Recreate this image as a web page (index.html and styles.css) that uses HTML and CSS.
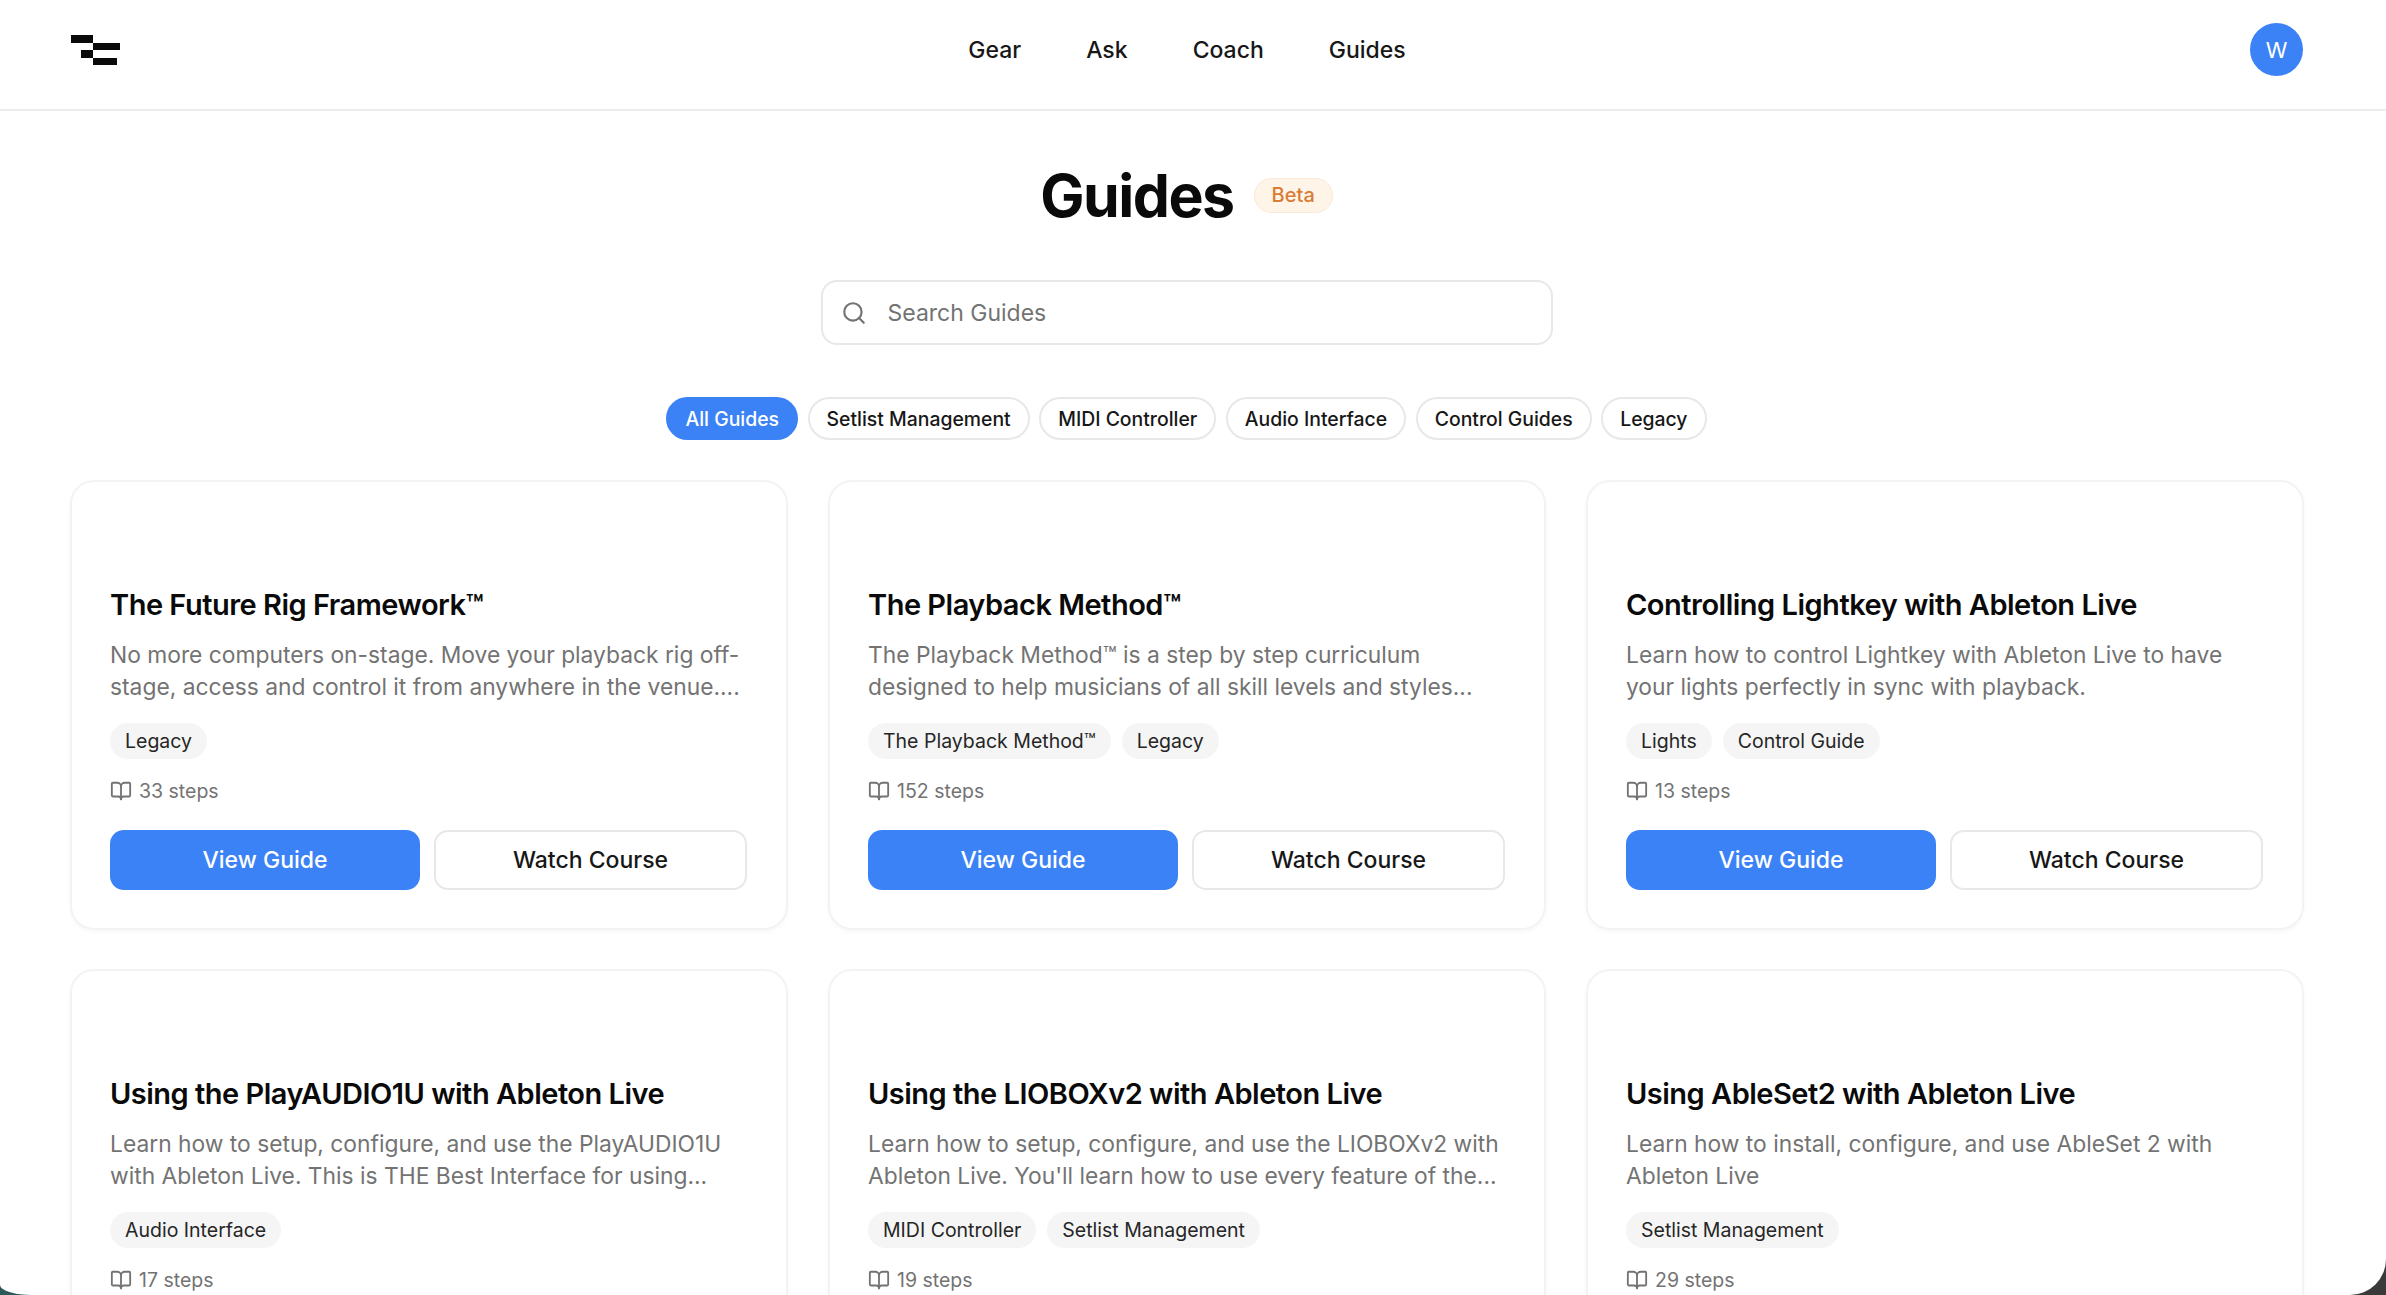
FILE: index.html
```html
<!DOCTYPE html>
<html lang="en">
<head>
    <meta charset="UTF-8">
    <meta name="viewport" content="width=device-width, initial-scale=1.0">
    <title>Guides</title>
    <link rel="stylesheet" href="styles.css">
</head>
<body>
    <div class="page">
        <header class="topbar">
            <a class="logo" href="#" aria-label="Home">
                <svg width="49" height="30" viewBox="0 0 49 30" fill="#0a0a0a">
                    <rect x="0" y="0" width="22" height="8"/>
                    <rect x="22" y="8" width="27" height="7"/>
                    <rect x="10" y="15" width="12" height="8"/>
                    <rect x="22" y="23" width="24" height="7"/>
                </svg>
            </a>
            <nav class="nav">
                <a href="#">Gear</a>
                <a href="#">Ask</a>
                <a href="#">Coach</a>
                <a href="#">Guides</a>
            </nav>
            <div class="avatar">W</div>
        </header>

        <main class="content">
            <div class="heading">
                <h1>Guides</h1>
                <span class="beta">Beta</span>
            </div>

            <label class="search">
                <svg class="search-icon" width="26" height="26" viewBox="0 0 24 24" fill="none" stroke="#737373" stroke-width="2" stroke-linecap="round" stroke-linejoin="round">
                    <circle cx="11" cy="11" r="8"/>
                    <path d="m21 21-4.3-4.3"/>
                </svg>
                <input type="text" placeholder="Search Guides">
            </label>

            <div class="filters">
                <button class="filter active">All Guides</button>
                <button class="filter">Setlist Management</button>
                <button class="filter">MIDI Controller</button>
                <button class="filter">Audio Interface</button>
                <button class="filter">Control Guides</button>
                <button class="filter">Legacy</button>
            </div>

            <div class="grid">
                <article class="card">
                    <h2>The Future Rig Framework™</h2>
                    <p>No more computers on-stage. Move your playback rig off-stage, access and control it from anywhere in the venue....</p>
                    <div class="tags"><span class="tag">Legacy</span></div>
                    <div class="steps">
                        <svg width="22" height="22" viewBox="0 0 24 24" fill="none" stroke="#737373" stroke-width="2" stroke-linecap="round" stroke-linejoin="round"><path d="M12 7v14"/><path d="M3 18a1 1 0 0 1-1-1V4a1 1 0 0 1 1-1h5a4 4 0 0 1 4 4 4 4 0 0 1 4-4h5a1 1 0 0 1 1 1v13a1 1 0 0 1-1 1h-6a3 3 0 0 0-3 3 3 3 0 0 0-3-3z"/></svg>
                        33 steps
                    </div>
                    <div class="actions">
                        <a class="btn primary" href="#">View Guide</a>
                        <a class="btn outline" href="#">Watch Course</a>
                    </div>
                </article>

                <article class="card">
                    <h2>The Playback Method™</h2>
                    <p>The Playback Method™ is a step by step curriculum designed to help musicians of all skill levels and styles...</p>
                    <div class="tags"><span class="tag">The Playback Method™</span><span class="tag">Legacy</span></div>
                    <div class="steps">
                        <svg width="22" height="22" viewBox="0 0 24 24" fill="none" stroke="#737373" stroke-width="2" stroke-linecap="round" stroke-linejoin="round"><path d="M12 7v14"/><path d="M3 18a1 1 0 0 1-1-1V4a1 1 0 0 1 1-1h5a4 4 0 0 1 4 4 4 4 0 0 1 4-4h5a1 1 0 0 1 1 1v13a1 1 0 0 1-1 1h-6a3 3 0 0 0-3 3 3 3 0 0 0-3-3z"/></svg>
                        152 steps
                    </div>
                    <div class="actions">
                        <a class="btn primary" href="#">View Guide</a>
                        <a class="btn outline" href="#">Watch Course</a>
                    </div>
                </article>

                <article class="card">
                    <h2>Controlling Lightkey with Ableton Live</h2>
                    <p>Learn how to control Lightkey with Ableton Live to have your lights perfectly in sync with playback.</p>
                    <div class="tags"><span class="tag">Lights</span><span class="tag">Control Guide</span></div>
                    <div class="steps">
                        <svg width="22" height="22" viewBox="0 0 24 24" fill="none" stroke="#737373" stroke-width="2" stroke-linecap="round" stroke-linejoin="round"><path d="M12 7v14"/><path d="M3 18a1 1 0 0 1-1-1V4a1 1 0 0 1 1-1h5a4 4 0 0 1 4 4 4 4 0 0 1 4-4h5a1 1 0 0 1 1 1v13a1 1 0 0 1-1 1h-6a3 3 0 0 0-3 3 3 3 0 0 0-3-3z"/></svg>
                        13 steps
                    </div>
                    <div class="actions">
                        <a class="btn primary" href="#">View Guide</a>
                        <a class="btn outline" href="#">Watch Course</a>
                    </div>
                </article>

                <article class="card">
                    <h2>Using the PlayAUDIO1U with Ableton Live</h2>
                    <p>Learn how to setup, configure, and use the PlayAUDIO1U with Ableton Live. This is THE Best Interface for using...</p>
                    <div class="tags"><span class="tag">Audio Interface</span></div>
                    <div class="steps">
                        <svg width="22" height="22" viewBox="0 0 24 24" fill="none" stroke="#737373" stroke-width="2" stroke-linecap="round" stroke-linejoin="round"><path d="M12 7v14"/><path d="M3 18a1 1 0 0 1-1-1V4a1 1 0 0 1 1-1h5a4 4 0 0 1 4 4 4 4 0 0 1 4-4h5a1 1 0 0 1 1 1v13a1 1 0 0 1-1 1h-6a3 3 0 0 0-3 3 3 3 0 0 0-3-3z"/></svg>
                        17 steps
                    </div>
                    <div class="actions">
                        <a class="btn primary" href="#">View Guide</a>
                        <a class="btn outline" href="#">Watch Course</a>
                    </div>
                </article>

                <article class="card">
                    <h2>Using the LIOBOXv2 with Ableton Live</h2>
                    <p>Learn how to setup, configure, and use the LIOBOXv2 with Ableton Live. You'll learn how to use every feature of the...</p>
                    <div class="tags"><span class="tag">MIDI Controller</span><span class="tag">Setlist Management</span></div>
                    <div class="steps">
                        <svg width="22" height="22" viewBox="0 0 24 24" fill="none" stroke="#737373" stroke-width="2" stroke-linecap="round" stroke-linejoin="round"><path d="M12 7v14"/><path d="M3 18a1 1 0 0 1-1-1V4a1 1 0 0 1 1-1h5a4 4 0 0 1 4 4 4 4 0 0 1 4-4h5a1 1 0 0 1 1 1v13a1 1 0 0 1-1 1h-6a3 3 0 0 0-3 3 3 3 0 0 0-3-3z"/></svg>
                        19 steps
                    </div>
                    <div class="actions">
                        <a class="btn primary" href="#">View Guide</a>
                        <a class="btn outline" href="#">Watch Course</a>
                    </div>
                </article>

                <article class="card">
                    <h2>Using AbleSet2 with Ableton Live</h2>
                    <p>Learn how to install, configure, and use AbleSet 2 with Ableton Live</p>
                    <div class="tags"><span class="tag">Setlist Management</span></div>
                    <div class="steps">
                        <svg width="22" height="22" viewBox="0 0 24 24" fill="none" stroke="#737373" stroke-width="2" stroke-linecap="round" stroke-linejoin="round"><path d="M12 7v14"/><path d="M3 18a1 1 0 0 1-1-1V4a1 1 0 0 1 1-1h5a4 4 0 0 1 4 4 4 4 0 0 1 4-4h5a1 1 0 0 1 1 1v13a1 1 0 0 1-1 1h-6a3 3 0 0 0-3 3 3 3 0 0 0-3-3z"/></svg>
                        29 steps
                    </div>
                    <div class="actions">
                        <a class="btn primary" href="#">View Guide</a>
                        <a class="btn outline" href="#">Watch Course</a>
                    </div>
                </article>
            </div>
        </main>
    </div>
</body>
</html>
```

FILE: styles.css
```css
* {
    margin: 0;
    padding: 0;
    box-sizing: border-box;
}

html {
    background: linear-gradient(90deg, #2c5a58 0%, #3a3a3a 100%);
}

body {
    font-family: Inter, 'Noto Sans', sans-serif;
    color: #0a0a0a;
    height: 100vh;
    overflow: hidden;
}

.page {
    height: 100%;
    background: #fff;
    overflow: hidden;
    border-bottom-left-radius: 32px 10px;
    border-bottom-right-radius: 36px;
}

.topbar {
    height: 111px;
    padding: 0 83px 10px 71px;
    border-bottom: 2px solid #ececec;
    display: grid;
    grid-template-columns: 1fr auto 1fr;
    align-items: center;
}

.logo {
    display: flex;
}

.nav {
    display: flex;
    gap: 65px;
}

.nav a {
    color: #171717;
    text-decoration: none;
    font-size: 23px;
    font-weight: 500;
}

.avatar {
    justify-self: end;
    width: 53px;
    height: 53px;
    border-radius: 50%;
    background: #3b82f6;
    color: #fff;
    font-size: 22px;
    display: flex;
    align-items: center;
    justify-content: center;
}

.content {
    padding: 48px 83px 0 70px;
}

.heading {
    display: flex;
    align-items: center;
    justify-content: center;
    gap: 20px;
    height: 72px;
}

h1 {
    font-size: 59px;
    font-weight: 700;
    letter-spacing: -1.5px;
}

.beta {
    height: 35px;
    padding: 0 17px;
    border-radius: 18px;
    background: #fff4e8;
    border: 1px solid #fbe9d6;
    color: #d97c35;
    font-size: 20px;
    font-weight: 500;
    display: flex;
    align-items: center;
}

.search {
    width: 732px;
    height: 65px;
    margin: 49px auto 0;
    padding: 0 18px;
    border: 2px solid #e8e8e8;
    border-radius: 16px;
    display: flex;
    align-items: center;
    gap: 21px;
}

.search input {
    flex: 1;
    border: none;
    outline: none;
    font-family: inherit;
    font-size: 23px;
    color: #171717;
}

.search input::placeholder {
    color: #737373;
}

.filters {
    display: flex;
    justify-content: center;
    gap: 9.5px;
    margin-top: 52px;
}

.filter {
    height: 43px;
    padding: 0 17px;
    border: 2px solid #e8e8e8;
    border-radius: 22px;
    background: #fff;
    color: #171717;
    font-family: inherit;
    font-size: 19.4px;
    font-weight: 500;
}

.filter.active {
    background: #3b82f6;
    border-color: #3b82f6;
    color: #fff;
}

.grid {
    display: grid;
    grid-template-columns: repeat(3, 718px);
    gap: 39px 40px;
    margin-top: 40px;
}

.card {
    height: 450px;
    padding: 105px 38px 0;
    border: 2px solid #f3f3f3;
    border-radius: 24px;
    box-shadow: 0 2px 4px rgba(0, 0, 0, 0.03);
    background: #fff;
}

.card h2 {
    font-size: 29px;
    line-height: 36px;
    font-weight: 600;
    letter-spacing: -0.5px;
}

.card p {
    margin-top: 16px;
    color: #737373;
    font-size: 22.8px;
    line-height: 32px;
}

.tags {
    display: flex;
    gap: 11px;
    margin-top: 20px;
}

.tag {
    height: 36px;
    padding: 0 15px;
    border-radius: 18px;
    background: #f5f5f5;
    color: #262626;
    font-size: 19.5px;
    display: flex;
    align-items: center;
}

.steps {
    display: flex;
    align-items: center;
    gap: 7px;
    margin-top: 21px;
    color: #737373;
    font-size: 19.5px;
    height: 22px;
}

.actions {
    display: grid;
    grid-template-columns: 310px 313px;
    gap: 14px;
    margin-top: 28px;
}

.btn {
    height: 60px;
    border-radius: 14px;
    font-size: 23px;
    font-weight: 500;
    text-decoration: none;
    display: flex;
    align-items: center;
    justify-content: center;
}

.btn.primary {
    background: #3b82f6;
    color: #fff;
}

.btn.outline {
    border: 2px solid #e8e8e8;
    color: #171717;
}
```
